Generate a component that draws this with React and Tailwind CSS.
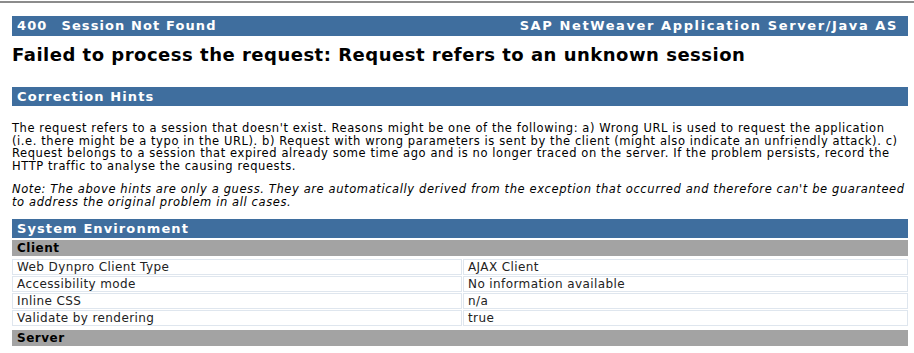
import React from 'react';

const rows = [
  ['Web Dynpro Client Type', 'AJAX Client'],
  ['Accessibility mode', 'No information available'],
  ['Inline CSS', 'n/a'],
  ['Validate by rendering', 'true'],
];

const Bar = ({ children }) => (
  <div className="h-[19px] bg-[#3f6e9e] text-white font-bold text-[13px] tracking-[1.1px] leading-[19px] px-[5px] flex justify-between">
    {children}
  </div>
);

const GrayRow = ({ label }) => (
  <div className="h-[16px] bg-[#a3a3a3] text-black font-bold text-[12px] tracking-[0.5px] leading-[16px] px-[5px]">
    {label}
  </div>
);

const App = () => {
  return (
    <div className="w-[914px] h-[353px] bg-white overflow-hidden text-black" style={{ fontFamily: '"DejaVu Sans", Verdana, sans-serif' }}>
      <div className="h-[1px]" />
      <div className="h-[2px] bg-[#8c8c8c]" />

      <div className="ml-[12px] w-[896px] pt-[13px]">
        <div className="h-[20px] bg-[#3f6e9e] text-white font-bold text-[13px] leading-[20px] pl-[5px] pr-[10px] flex justify-between">
          <span className="tracking-[1.1px]">
            400<span className="ml-[14px]">Session Not Found</span>
          </span>
          <span className="tracking-[1.6px]">SAP NetWeaver Application Server/Java AS</span>
        </div>

        <h1 className="mt-[8px] text-[18px] tracking-[0.5px] font-bold leading-[22px] whitespace-nowrap">
          Failed to process the request: Request refers to an unknown session
        </h1>

        <div className="mt-[21px]">
          <Bar>
            <span>Correction Hints</span>
          </Bar>
        </div>

        <p className="mt-[16px] text-[11.5px] tracking-[0.58px] leading-[12.5px] whitespace-nowrap">
          The request refers to a session that doesn't exist. Reasons might be one of the following: a) Wrong URL is used to request the application<br />
          (i.e. there might be a typo in the URL). b) Request with wrong parameters is sent by the client (might also indicate an unfriendly attack). c)<br />
          Request belongs to a session that expired already some time ago and is no longer traced on the server. If the problem persists, record the<br />
          HTTP traffic to analyse the causing requests.
        </p>

        <p className="mt-[11px] text-[11.5px] tracking-[0.6px] leading-[12.5px] italic whitespace-nowrap">
          Note: The above hints are only a guess. They are automatically derived from the exception that occurred and therefore can't be guaranteed<br />
          to address the original problem in all cases.
        </p>

        <div className="mt-[11px]">
          <Bar>
            <span>System Environment</span>
          </Bar>
          <div className="mt-[2px]">
            <GrayRow label="Client" />
          </div>
          <div className="mt-[3px] flex flex-col gap-[1px]">
            {rows.map(([k, v]) => (
              <div key={k} className="flex gap-[1px] text-[12px] tracking-[0.4px] text-[#222]">
                <div className="w-[450px] h-[16px] leading-[14px] border border-[#dfe6ee] px-[4px] whitespace-nowrap">{k}</div>
                <div className="flex-1 h-[16px] leading-[14px] border border-[#dfe6ee] px-[4px] whitespace-nowrap">{v}</div>
              </div>
            ))}
          </div>
          <div className="mt-[4px]">
            <GrayRow label="Server" />
          </div>
        </div>
      </div>
    </div>
  );
};

export default App;
